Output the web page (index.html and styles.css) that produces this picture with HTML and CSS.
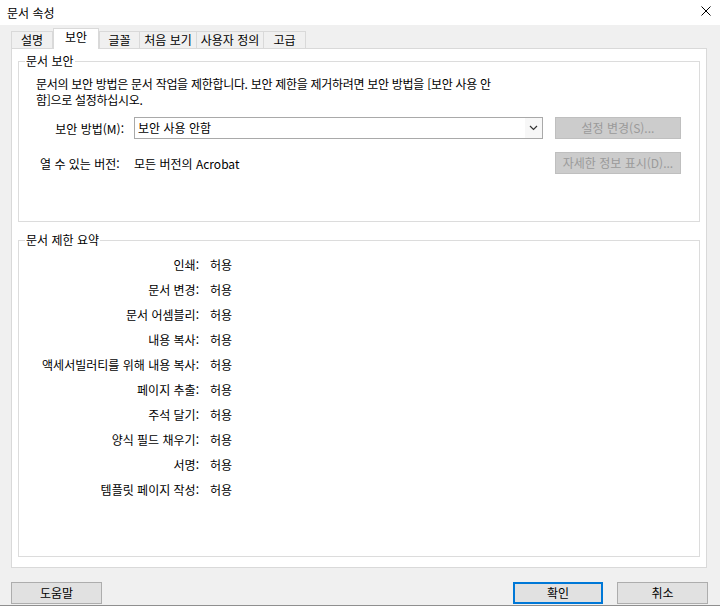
FILE: index.html
```html
<!DOCTYPE html>
<html lang="ko">
<head>
<meta charset="utf-8">
<title>문서 속성</title>
<link rel="stylesheet" href="styles.css">
</head>
<body>
<div class="window">
  <div class="titlebar">
    <span class="title">문서 속성</span>
    <svg class="close" width="10" height="10" viewBox="0 0 10 10"><path d="M0.5 0.5L9.5 9.5M9.5 0.5L0.5 9.5" stroke="#000" stroke-width="1" fill="none"/></svg>
  </div>
  <div class="main">
    <div class="tabs">
      <div class="tab t1">설명</div>
      <div class="tab active">보안</div>
      <div class="tab t3">글꼴</div>
      <div class="tab t4">처음 보기</div>
      <div class="tab t5">사용자 정의</div>
      <div class="tab t6">고급</div>
    </div>
    <div class="panel">
      <fieldset class="group security">
        <legend>문서 보안</legend>
        <p class="desc">문서의 보안 방법은 문서 작업을 제한합니다. 보안 제한을 제거하려면 보안 방법을 [보안 사용 안<br>함]으로 설정하십시오.</p>
        <div class="row row1">
          <span class="label right">보안 방법(M):</span>
          <div class="select">
            <span class="select-text">보안 사용 안함</span>
            <span class="select-arrow"><svg width="9" height="6" viewBox="0 0 9 6"><path d="M1 1L4.5 4.5L8 1" stroke="#333" stroke-width="1.2" fill="none"/></svg></span>
          </div>
          <button class="btn disabled">설정 변경(S)...</button>
        </div>
        <div class="row row2">
          <span class="label left">열 수 있는 버전:</span>
          <span class="value">모든 버전의 Acrobat</span>
          <button class="btn disabled">자세한 정보 표시(D)...</button>
        </div>
      </fieldset>
      <fieldset class="group summary">
        <legend>문서 제한 요약</legend>
        <div class="grid">
          <span class="k">인쇄:</span><span class="v">허용</span>
          <span class="k">문서 변경:</span><span class="v">허용</span>
          <span class="k">문서 어셈블리:</span><span class="v">허용</span>
          <span class="k">내용 복사:</span><span class="v">허용</span>
          <span class="k">액세서빌러티를 위해 내용 복사:</span><span class="v">허용</span>
          <span class="k">페이지 추출:</span><span class="v">허용</span>
          <span class="k">주석 달기:</span><span class="v">허용</span>
          <span class="k">양식 필드 채우기:</span><span class="v">허용</span>
          <span class="k">서명:</span><span class="v">허용</span>
          <span class="k">템플릿 페이지 작성:</span><span class="v">허용</span>
        </div>
      </fieldset>
    </div>
    <div class="footer">
      <button class="btn help">도움말</button>
      <div class="spacer"></div>
      <button class="btn ok">확인</button>
      <button class="btn cancel">취소</button>
    </div>
  </div>
</div>
</body>
</html>
```
FILE: styles.css
```css
html, body {
  margin: 0;
  padding: 0;
}
body {
  width: 720px;
  height: 606px;
  overflow: hidden;
  background: #f0f0f0;
  font-family: "Noto Sans CJK KR", "Noto Sans", sans-serif;
  font-size: 12px;
  color: #000;
}
.window {
  width: 720px;
  height: 606px;
  box-sizing: border-box;
  border-bottom: 1px solid #8f8f8f;
}
.titlebar {
  height: 25px;
  background: #fff;
  display: flex;
  align-items: center;
  justify-content: space-between;
  padding: 0 9px 0 7px;
  box-sizing: border-box;
}
.title {
  line-height: 16px;
}
.close {
  display: block;
  margin-top: -3px;
}
.main {
  padding: 3px 13px 0 11px;
}
.tabs {
  display: flex;
  align-items: flex-end;
  height: 21px;
  margin-bottom: -1px;
  position: relative;
  z-index: 1;
}
.tab {
  height: 17px;
  box-sizing: border-box;
  border: 1px solid #d9d9d9;
  border-bottom: none;
  background: #f0f0f0;
  margin-bottom: 1px;
  margin-left: -1px;
  padding: 0;
  line-height: 16px;
  text-align: center;
  white-space: nowrap;
  flex: none;
}
.t1 { margin-left: 0; width: 42px; }
.t3 { width: 41px; margin-left: 0; }
.t4 { width: 58px; }
.t5 { width: 68px; }
.t6 { width: 43px; }
.tab.active {
  height: 21px;
  width: 46px;
  background: #fff;
  margin-bottom: 0;
  margin-left: 0;
  margin-right: 0;
  line-height: 15px;
}
.panel {
  background: #fff;
  border: 1px solid #d9d9d9;
  height: 514px;
  padding: 4px 6px 0 6px;
}
.group {
  margin: 0;
  border: 1px solid #dcdcdc;
  box-sizing: border-box;
  min-width: 0;
}
.group legend {
  line-height: 16px;
  padding: 0 1px;
}
.security {
  height: 169px;
  padding: 0 0 0 17px;
}
.security legend {
  margin-left: -11px;
}
.desc {
  margin: 7px 0 0 0;
  line-height: 16px;
  letter-spacing: -0.3px;
}
.row {
  display: flex;
  align-items: center;
  height: 22px;
}
.row1 {
  margin-top: 9px;
}
.row2 {
  margin-top: 13px;
}
.label.right {
  width: 88px;
  text-align: right;
  margin-right: 10px;
}
.label.left {
  width: 94px;
  padding-left: 4px;
  white-space: nowrap;
}
.value {
  width: 409px;
}
.select {
  width: 409px;
  height: 22px;
  box-sizing: border-box;
  border: 1px solid #a9a9a9;
  display: flex;
  align-items: center;
  background: #fff;
}
.select-text {
  flex: 1;
  padding-left: 3px;
  line-height: 16px;
}
.select-arrow {
  width: 17px;
  height: 20px;
  display: flex;
  align-items: center;
  justify-content: center;
  background: #f7f7f7;
}
.select-arrow svg {
  display: block;
}
.btn {
  font-family: inherit;
  font-size: 12px;
  height: 22px;
  box-sizing: border-box;
  border: 1px solid #adadad;
  background: #e1e1e1;
  color: #000;
  padding: 0;
  margin: 0;
  line-height: 16px;
  white-space: nowrap;
}
.btn.disabled {
  width: 126px;
  margin-left: 12px;
  background: #cccccc;
  border-color: #bfbfbf;
  color: #9a9a9a;
}
.summary {
  height: 325px;
  margin-top: 10px;
  padding: 0;
}
.summary legend {
  margin-left: 6px;
}
.grid {
  display: grid;
  grid-template-columns: 180px auto;
  column-gap: 11px;
  grid-auto-rows: 25px;
  align-items: center;
  padding-top: 4px;
}
.k {
  text-align: right;
}
.footer {
  display: flex;
  margin-top: 14px;
  margin-right: -1px;
  height: 22px;
}
.spacer {
  flex: 1;
}
.help {
  width: 91px;
}
.ok {
  width: 90px;
  border: 2px solid #0078d7;
}
.cancel {
  width: 91px;
  margin-left: 14px;
}
```
